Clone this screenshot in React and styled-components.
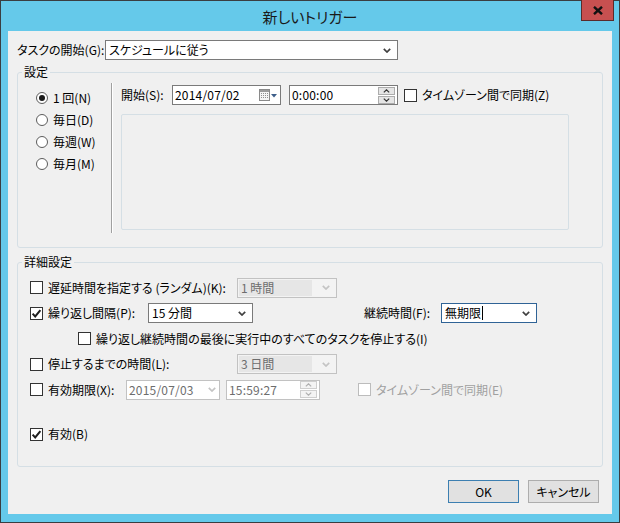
import React from 'react';
import styled, { createGlobalStyle } from 'styled-components';

const GlobalStyle = createGlobalStyle`
  html, body { margin: 0; padding: 0; background: #ffffff; }
  body {
    font-family: "Noto Sans CJK JP", "Noto Sans", sans-serif;
    font-size: 12px;
    color: #000;
  }
  * { box-sizing: border-box; }
`;

const Window = styled.div`
  position: relative;
  width: 620px;
  height: 523px;
  border: 1px solid #3a3e41;
  background: #65c9ea;
  padding: 0 7px 8px;
  display: flex;
  flex-direction: column;
`;

const TitleBar = styled.div`
  height: 30px;
  flex: none;
  display: flex;
  align-items: center;
  justify-content: center;
  font-size: 15px;
  color: #1a1a1a;
  font-feature-settings: "palt";
  padding-top: 1px;
`;

const CloseButton = styled.div`
  position: absolute;
  top: -1px;
  right: 5px;
  width: 33px;
  height: 21px;
  background: #c75050;
  border: 1px solid #5a2b2b;
  border-top: none;
  display: flex;
  align-items: center;
  justify-content: center;
`;

const Client = styled.div`
  flex: 1;
  background: #f0f0f0;
  padding: 9px 9px 0 9px;
  display: flex;
  flex-direction: column;
  font-feature-settings: "palt";
  line-height: 16px;
`;

const TopRow = styled.div`
  height: 20px;
  display: flex;
  align-items: center;
`;

const FieldLabel = styled.span`
  width: ${p => p.$w}px;
  margin-left: ${p => p.$ml || 0}px;
  flex: none;
  white-space: nowrap;
  color: ${p => (p.$disabled ? '#a0a0a0' : '#000')};
`;

const Combo = styled.div`
  width: ${p => p.$w}px;
  height: 20px;
  flex: none;
  margin-left: ${p => p.$ml || 0}px;
  display: flex;
  align-items: center;
  justify-content: space-between;
  background: ${p => (p.$disabled ? '#f3f3f3' : '#ffffff')};
  border: 1px solid ${p => (p.$focus ? '#2f6396' : p.$disabled ? '#c2c2c2' : '#7a7a7a')};
  padding: ${p => (p.$disabled ? '1px 6px 1px 1px' : '0 6px 0 3px')};
  color: ${p => (p.$disabled ? '#6d6d6d' : '#000')};
  white-space: nowrap;
`;

const ComboText = styled.span`
  flex: 1;
  height: 100%;
  display: flex;
  align-items: center;
  background: ${p => (p.$disabled ? '#e6e6e6' : 'transparent')};
  padding-left: ${p => (p.$disabled ? '2px' : '0')};
  margin-right: ${p => (p.$disabled ? '10px' : '0')};
`;

const Caret = styled.span`
  display: inline-block;
  width: 1px;
  height: 14px;
  background: #000;
  margin-left: 1px;
`;

const Chevron = ({ color = '#404040' }) => (
  <svg width="8" height="5" viewBox="0 0 8 5" style={{ flex: 'none' }}>
    <polyline points="0.8,0.8 4,4 7.2,0.8" fill="none" stroke={color} strokeWidth="1.7" />
  </svg>
);

const GroupBox = styled.div`
  position: relative;
  margin-top: ${p => p.$mt}px;
  height: ${p => p.$h}px;
  border: 1px solid #d5dfe5;
  border-radius: 3px;
  flex: none;
`;

const Legend = styled.span`
  position: absolute;
  top: -9px;
  left: 4px;
  padding: 0 2px;
  background: #f0f0f0;
  line-height: 16px;
`;

const ScheduleBody = styled.div`
  display: flex;
  align-items: flex-start;
  height: 100%;
`;

const RadioColumn = styled.div`
  width: 93px;
  flex: none;
  padding: 14px 0 0 18px;
  display: flex;
  flex-direction: column;
`;

const RadioRow = styled.label`
  height: 22px;
  display: flex;
  align-items: center;
  gap: 5px;
  white-space: nowrap;
`;

const RadioCircle = styled.span`
  width: 12px;
  height: 12px;
  flex: none;
  border-radius: 50%;
  border: 1px solid #5c5c5c;
  background: #fff;
  display: flex;
  align-items: center;
  justify-content: center;
  &::after {
    content: "";
    width: 6px;
    height: 6px;
    border-radius: 50%;
    background: #1a1a1a;
    display: ${p => (p.$checked ? 'block' : 'none')};
  }
`;

const Separator = styled.div`
  width: 2px;
  height: 150px;
  margin-top: 10px;
  flex: none;
  border-left: 1px solid #a0a0a0;
  border-right: 1px solid #ffffff;
`;

const ScheduleRight = styled.div`
  margin-left: 8px;
  padding-top: 12px;
  display: flex;
  flex-direction: column;
`;

const StartRow = styled.div`
  height: 20px;
  display: flex;
  align-items: center;
`;

const DateBox = styled.div`
  width: ${p => p.$w}px;
  height: 20px;
  flex: none;
  margin-left: ${p => p.$ml || 0}px;
  display: flex;
  align-items: center;
  background: #fff;
  border: 1px solid ${p => (p.$disabled ? '#c2c2c2' : '#7a7a7a')};
  padding: 0 3px 0 2px;
  color: ${p => (p.$disabled ? '#6d6d6d' : '#000')};
  letter-spacing: 0.2px;
`;

const DateText = styled.span`
  flex: 1;
`;

const Spinner = styled.div`
  width: 17px;
  height: 17px;
  flex: none;
  display: flex;
  flex-direction: column;
  gap: 1px;
  margin-right: -1px;
`;

const SpinButton = styled.div`
  flex: 1;
  display: flex;
  align-items: center;
  justify-content: center;
  background: ${p => (p.$disabled ? '#f4f4f4' : '#e5e5e5')};
  border: 1px solid ${p => (p.$disabled ? '#cfcfcf' : '#acacac')};
`;

const SpinGlyph = ({ up, color }) => (
  <svg width="7" height="4" viewBox="0 0 7 4">
    <polyline
      points={up ? '0.8,3.4 3.5,0.8 6.2,3.4' : '0.8,0.6 3.5,3.2 6.2,0.6'}
      fill="none"
      stroke={color}
      strokeWidth="1.2"
    />
  </svg>
);

const CalendarIcon = () => (
  <svg width="18" height="12" viewBox="0 0 18 12" style={{ flex: 'none' }}>
    <rect x="0.5" y="0.5" width="10" height="11" fill="#f4f4f4" stroke="#8a8a8a" />
    <rect x="1" y="1" width="9" height="2" fill="#9a9a9a" />
    {[4, 6, 8].map(y =>
      [2, 4, 6, 8].map(x => <rect key={`${x}-${y}`} x={x} y={y} width="1" height="1" fill="#8f8f8f" />)
    )}
    <polygon points="12,5 18,5 15,8.5" fill="#3e5f8a" />
  </svg>
);

const Checkbox = styled.span`
  width: 13px;
  height: 13px;
  flex: none;
  margin-left: ${p => p.$ml || 0}px;
  border: 1px solid ${p => (p.$disabled ? '#bcbcbc' : '#333333')};
  background: #fff;
  display: flex;
  align-items: center;
  justify-content: center;
`;

const CheckMark = () => (
  <svg width="11" height="11" viewBox="0 0 11 11">
    <polyline points="1.6,5.6 4.2,8.4 9.4,2.2" fill="none" stroke="#1e1e1e" strokeWidth="2" />
  </svg>
);

const CheckField = styled.label`
  display: flex;
  align-items: center;
  gap: 5px;
  flex: none;
  width: ${p => (p.$w ? `${p.$w}px` : 'auto')};
  margin-left: ${p => p.$ml || 0}px;
  white-space: nowrap;
  color: ${p => (p.$disabled ? '#a0a0a0' : '#000')};
`;

const InnerPanel = styled.div`
  margin-top: 9px;
  width: 448px;
  height: 116px;
  border: 1px solid #d5dfe5;
  border-radius: 2px;
`;

const AdvancedBody = styled.div`
  padding: 12px 0 0 12px;
  display: flex;
  flex-direction: column;
`;

const OptionRow = styled.div`
  height: 25.5px;
  margin-top: ${p => p.$mt || 0}px;
  display: flex;
  align-items: center;
`;

const ButtonRow = styled.div`
  margin-top: 13px;
  padding-right: 4px;
  display: flex;
  justify-content: flex-end;
  gap: 9px;
`;

const DialogButton = styled.button`
  width: 71px;
  height: 23px;
  font: inherit;
  font-feature-settings: "palt";
  color: #000;
  background: #e1e1e1;
  border: 1px solid ${p => (p.$default ? '#3c7fb1' : '#adadad')};
  padding: 0;
  display: flex;
  align-items: center;
  justify-content: center;
`;

function Check({ checked, disabled, ml }) {
  return (
    <Checkbox $disabled={disabled} $ml={ml}>
      {checked && <CheckMark />}
    </Checkbox>
  );
}

function DropCombo({ w, ml, disabled, focus, children }) {
  return (
    <Combo $w={w} $ml={ml} $disabled={disabled} $focus={focus}>
      <ComboText $disabled={disabled}>{children}</ComboText>
      <Chevron color={disabled ? '#c4c4c4' : '#404040'} />
    </Combo>
  );
}

function TimeBox({ w, ml, disabled, value }) {
  const c = disabled ? '#b0b0b0' : '#333';
  return (
    <DateBox $w={w} $ml={ml} $disabled={disabled}>
      <DateText>{value}</DateText>
      <Spinner>
        <SpinButton $disabled={disabled}>
          <SpinGlyph up color={c} />
        </SpinButton>
        <SpinButton $disabled={disabled}>
          <SpinGlyph color={c} />
        </SpinButton>
      </Spinner>
    </DateBox>
  );
}

const radios = [
  { label: '1 回(N)', checked: true },
  { label: '毎日(D)' },
  { label: '毎週(W)' },
  { label: '毎月(M)' },
];

export default function App() {
  return (
    <>
      <GlobalStyle />
      <Window>
        <TitleBar>新しいトリガー</TitleBar>
        <CloseButton>
          <svg width="10" height="9" viewBox="0 0 10 9">
            <path d="M1 0.8 L9 8.2 M9 0.8 L1 8.2" stroke="#111" strokeWidth="2.4" fill="none" />
          </svg>
        </CloseButton>
        <Client>
          <TopRow>
            <FieldLabel $w={88}>タスクの開始(G):</FieldLabel>
            <DropCombo w={293}>スケジュールに従う</DropCombo>
          </TopRow>

          <GroupBox $mt={12} $h={176}>
            <Legend>設定</Legend>
            <ScheduleBody>
              <RadioColumn>
                {radios.map(r => (
                  <RadioRow key={r.label}>
                    <RadioCircle $checked={r.checked} />
                    {r.label}
                  </RadioRow>
                ))}
              </RadioColumn>
              <Separator />
              <ScheduleRight>
                <StartRow>
                  <FieldLabel $w={51}>開始(S):</FieldLabel>
                  <DateBox $w={109}>
                    <DateText>2014/07/02</DateText>
                    <CalendarIcon />
                  </DateBox>
                  <TimeBox w={109} ml={8} value="0:00:00" />
                  <CheckField $ml={6}>
                    <Check />
                    タイムゾーン間で同期(Z)
                  </CheckField>
                </StartRow>
                <InnerPanel />
              </ScheduleRight>
            </ScheduleBody>
          </GroupBox>

          <GroupBox $mt={14} $h={205}>
            <Legend>詳細設定</Legend>
            <AdvancedBody>
              <OptionRow>
                <CheckField $w={207}>
                  <Check />
                  遅延時間を指定する (ランダム)(K):
                </CheckField>
                <DropCombo w={100} disabled>1 時間</DropCombo>
              </OptionRow>
              <OptionRow>
                <CheckField $w={118}>
                  <Check checked />
                  繰り返し間隔(P):
                </CheckField>
                <DropCombo w={105}>15 分間</DropCombo>
                <FieldLabel $w={77} $ml={111}>継続時間(F):</FieldLabel>
                <DropCombo w={96} focus>
                  無期限<Caret />
                </DropCombo>
              </OptionRow>
              <OptionRow>
                <CheckField $ml={48}>
                  <Check />
                  繰り返し継続時間の最後に実行中のすべてのタスクを停止する(I)
                </CheckField>
              </OptionRow>
              <OptionRow>
                <CheckField $w={207}>
                  <Check />
                  停止するまでの時間(L):
                </CheckField>
                <DropCombo w={100} disabled>3 日間</DropCombo>
              </OptionRow>
              <OptionRow>
                <CheckField $w={96}>
                  <Check />
                  有効期限(X):
                </CheckField>
                <DateBox $w={94} $disabled>
                  <DateText>2015/07/03</DateText>
                  <Chevron color="#c4c4c4" />
                </DateBox>
                <TimeBox w={94} ml={6} disabled value="15:59:27" />
                <CheckField $ml={38} $disabled>
                  <Check disabled />
                  タイムゾーン間で同期(E)
                </CheckField>
              </OptionRow>
              <OptionRow $mt={19}>
                <CheckField>
                  <Check checked />
                  有効(B)
                </CheckField>
              </OptionRow>
            </AdvancedBody>
          </GroupBox>

          <ButtonRow>
            <DialogButton $default>OK</DialogButton>
            <DialogButton>キャンセル</DialogButton>
          </ButtonRow>
        </Client>
      </Window>
    </>
  );
}
